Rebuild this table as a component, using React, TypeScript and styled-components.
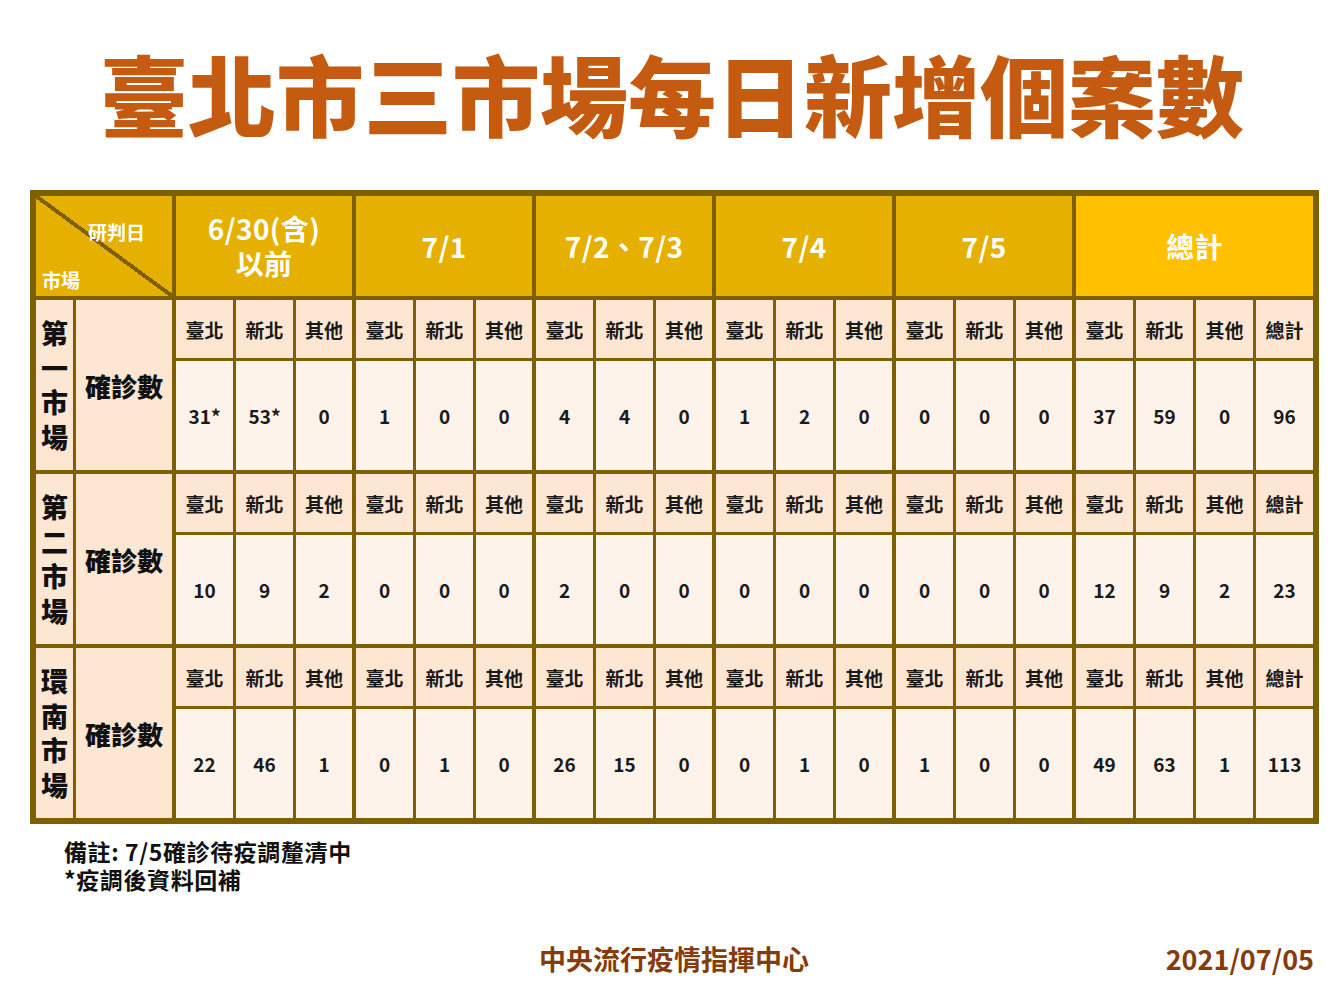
import React from "react";
import styled, { createGlobalStyle } from "styled-components";

const LINE = "#7f6000";
const GOLD = "#e6b000";
const AMBER = "#ffc000";
const PEACH = "#fde6d2";
const CREAM = "#fef3ea";
const FONT = `"Noto Sans CJK TC", "Noto Sans CJK SC", "Noto Sans", sans-serif`;

const GlobalStyle = createGlobalStyle`
  *, *::before, *::after { box-sizing: border-box; }
  html, body { margin: 0; padding: 0; background: #ffffff; }
  body { font-family: ${FONT}; color: #111; }
`;

const Page = styled.div`
  width: 1344px;
  height: 1008px;
  display: flex;
  flex-direction: column;
  overflow: hidden;
`;

const Title = styled.h1`
  margin: 0;
  padding-top: 48px;
  font-size: 88px;
  line-height: 88px;
  font-weight: 900;
  color: #c55a11;
  text-align: center;
  letter-spacing: 0;
`;

const TableWrap = styled.div`
  margin-top: 54px;
  padding-left: 30px;
`;

const Table = styled.table`
  width: 1289px;
  table-layout: fixed;
  border-collapse: separate;
  border-spacing: 0;
  border: 6px solid ${LINE};
`;

type Edge = { $right: number; $bottom: number };

const HeadRow = styled.tr`
  height: 104px;
`;
const SubRow = styled.tr`
  height: 61px;
`;
const ValueRow = styled.tr<{ $h: number }>`
  height: ${(p) => p.$h}px;
`;

const Corner = styled.th`
  padding: 0;
  border-right: 4px solid ${LINE};
  border-bottom: 4px solid ${LINE};
  background: linear-gradient(
    to top right,
    ${GOLD} calc(50% - 2px),
    ${LINE} calc(50% - 2px),
    ${LINE} calc(50% + 2px),
    ${GOLD} calc(50% + 2px)
  );
`;

const CornerInner = styled.div`
  height: 100px;
  display: flex;
  flex-direction: column;
  justify-content: space-between;
  padding: 25px 27px 5px 6px;
  color: #fff;
  font-size: 19px;
  line-height: 22px;
  font-weight: 700;
`;

const CornerTop = styled.span`
  align-self: flex-end;
`;
const CornerBottom = styled.span`
  align-self: flex-start;
`;

const DateHead = styled.th<Edge & { $bg: string }>`
  padding: 0;
  background: ${(p) => p.$bg};
  border-right: ${(p) => p.$right}px solid ${LINE};
  border-bottom: ${(p) => p.$bottom}px solid ${LINE};
  color: #fff;
  font-size: 28px;
  line-height: 35px;
  font-weight: 700;
  text-align: center;
  vertical-align: middle;
`;

const HeadLine = styled.span`
  display: block;
  letter-spacing: 0.4px;
`;

const MarketCell = styled.td<Edge>`
  padding: 0;
  background: ${PEACH};
  border-right: ${(p) => p.$right}px solid ${LINE};
  border-bottom: ${(p) => p.$bottom}px solid ${LINE};
  text-align: center;
  vertical-align: middle;
`;

const MarketName = styled.span`
  display: block;
  width: 28px;
  margin: 0 auto;
  font-size: 27px;
  line-height: 34.5px;
  font-weight: 900;
  color: #111;
  word-break: break-all;
`;

const LabelCell = styled.td<Edge>`
  padding: 0;
  background: ${PEACH};
  border-right: ${(p) => p.$right}px solid ${LINE};
  border-bottom: ${(p) => p.$bottom}px solid ${LINE};
  text-align: center;
  vertical-align: middle;
  font-size: 26px;
  font-weight: 900;
  color: #111;
`;

const SubCell = styled.td<Edge>`
  padding: 0;
  background: ${PEACH};
  border-right: ${(p) => p.$right}px solid ${LINE};
  border-bottom: ${(p) => p.$bottom}px solid ${LINE};
  text-align: center;
  vertical-align: middle;
  font-size: 19px;
  font-weight: 700;
  color: #1a1a1a;
`;

const ValueCell = styled.td<Edge>`
  padding: 0;
  background: ${CREAM};
  border-right: ${(p) => p.$right}px solid ${LINE};
  border-bottom: ${(p) => p.$bottom}px solid ${LINE};
  text-align: center;
  vertical-align: middle;
  font-size: 19px;
  font-weight: 700;
  color: #1a1a1a;
`;

const Notes = styled.div`
  margin-top: 13px;
  padding-left: 64px;
  display: flex;
  flex-direction: column;
  font-size: 23px;
  line-height: 28px;
  font-weight: 700;
  letter-spacing: 0.6px;
  color: #111;
`;

const NoteLine = styled.span`
  display: block;
  white-space: nowrap;
`;

const Footer = styled.div`
  margin-top: 49px;
  display: grid;
  grid-template-columns: 1fr auto 1fr;
  align-items: center;
  padding: 0 30px;
  font-size: 27px;
  line-height: 34px;
  font-weight: 700;
  color: #843c0c;
`;

const FooterCenter = styled.span`
  grid-column: 2;
  padding-left: 4px;
`;

const FooterDate = styled.span`
  grid-column: 3;
  justify-self: end;
`;

const dates: { lines: string[]; total?: boolean }[] = [
  { lines: ["6/30(含)", "以前"] },
  { lines: ["7/1"] },
  { lines: ["7/2、7/3"] },
  { lines: ["7/4"] },
  { lines: ["7/5"] },
  { lines: ["總計"], total: true },
];

const subLabels = [
  ...Array.from({ length: 5 }).flatMap(() => ["臺北", "新北", "其他"]),
  "臺北",
  "新北",
  "其他",
  "總計",
];

const markets = [
  {
    name: "第一市場",
    values: ["31*", "53*", "0", "1", "0", "0", "4", "4", "0", "1", "2", "0", "0", "0", "0", "37", "59", "0", "96"],
  },
  {
    name: "第二市場",
    values: ["10", "9", "2", "0", "0", "0", "2", "0", "0", "0", "0", "0", "0", "0", "0", "12", "9", "2", "23"],
  },
  {
    name: "環南市場",
    values: ["22", "46", "1", "0", "1", "0", "26", "15", "0", "0", "1", "0", "1", "0", "0", "49", "63", "1", "113"],
  },
];

// index in the 19 data columns -> right border width
const rightOf = (i: number) => {
  if (i === 18) return 0;
  if (i % 3 === 2 && i < 15) return 4;
  return 3;
};

const colWidths = [40, 100, ...Array(18).fill(60), 57];

export default function App() {
  return (
    <Page>
      <GlobalStyle />
      <Title>臺北市三市場每日新增個案數</Title>
      <TableWrap>
        <Table>
          <colgroup>
            {colWidths.map((w, i) => (
              <col key={i} style={{ width: w }} />
            ))}
          </colgroup>
          <tbody>
            <HeadRow>
              <Corner colSpan={2}>
                <CornerInner>
                  <CornerTop>研判日</CornerTop>
                  <CornerBottom>市場</CornerBottom>
                </CornerInner>
              </Corner>
              {dates.map((d, i) => (
                <DateHead
                  key={i}
                  colSpan={d.total ? 4 : 3}
                  $bg={d.total ? AMBER : GOLD}
                  $right={d.total ? 0 : 4}
                  $bottom={4}
                >
                  {d.lines.map((l) => (
                    <HeadLine key={l}>{l}</HeadLine>
                  ))}
                </DateHead>
              ))}
            </HeadRow>
            {markets.map((m, mi) => {
              const last = mi === markets.length - 1;
              const blockBottom = last ? 0 : 4;
              return (
                <React.Fragment key={m.name}>
                  <SubRow>
                    <MarketCell rowSpan={2} $right={3} $bottom={blockBottom}>
                      <MarketName>{m.name}</MarketName>
                    </MarketCell>
                    <LabelCell rowSpan={2} $right={4} $bottom={blockBottom}>
                      確診數
                    </LabelCell>
                    {subLabels.map((s, i) => (
                      <SubCell key={i} $right={rightOf(i)} $bottom={3}>
                        {s}
                      </SubCell>
                    ))}
                  </SubRow>
                  <ValueRow $h={last ? 109 : 113}>
                    {m.values.map((v, i) => (
                      <ValueCell key={i} $right={rightOf(i)} $bottom={blockBottom}>
                        {v}
                      </ValueCell>
                    ))}
                  </ValueRow>
                </React.Fragment>
              );
            })}
          </tbody>
        </Table>
      </TableWrap>
      <Notes>
        <NoteLine>備註: 7/5確診待疫調釐清中</NoteLine>
        <NoteLine>*疫調後資料回補</NoteLine>
      </Notes>
      <Footer>
        <FooterCenter>中央流行疫情指揮中心</FooterCenter>
        <FooterDate>2021/07/05</FooterDate>
      </Footer>
    </Page>
  );
}
